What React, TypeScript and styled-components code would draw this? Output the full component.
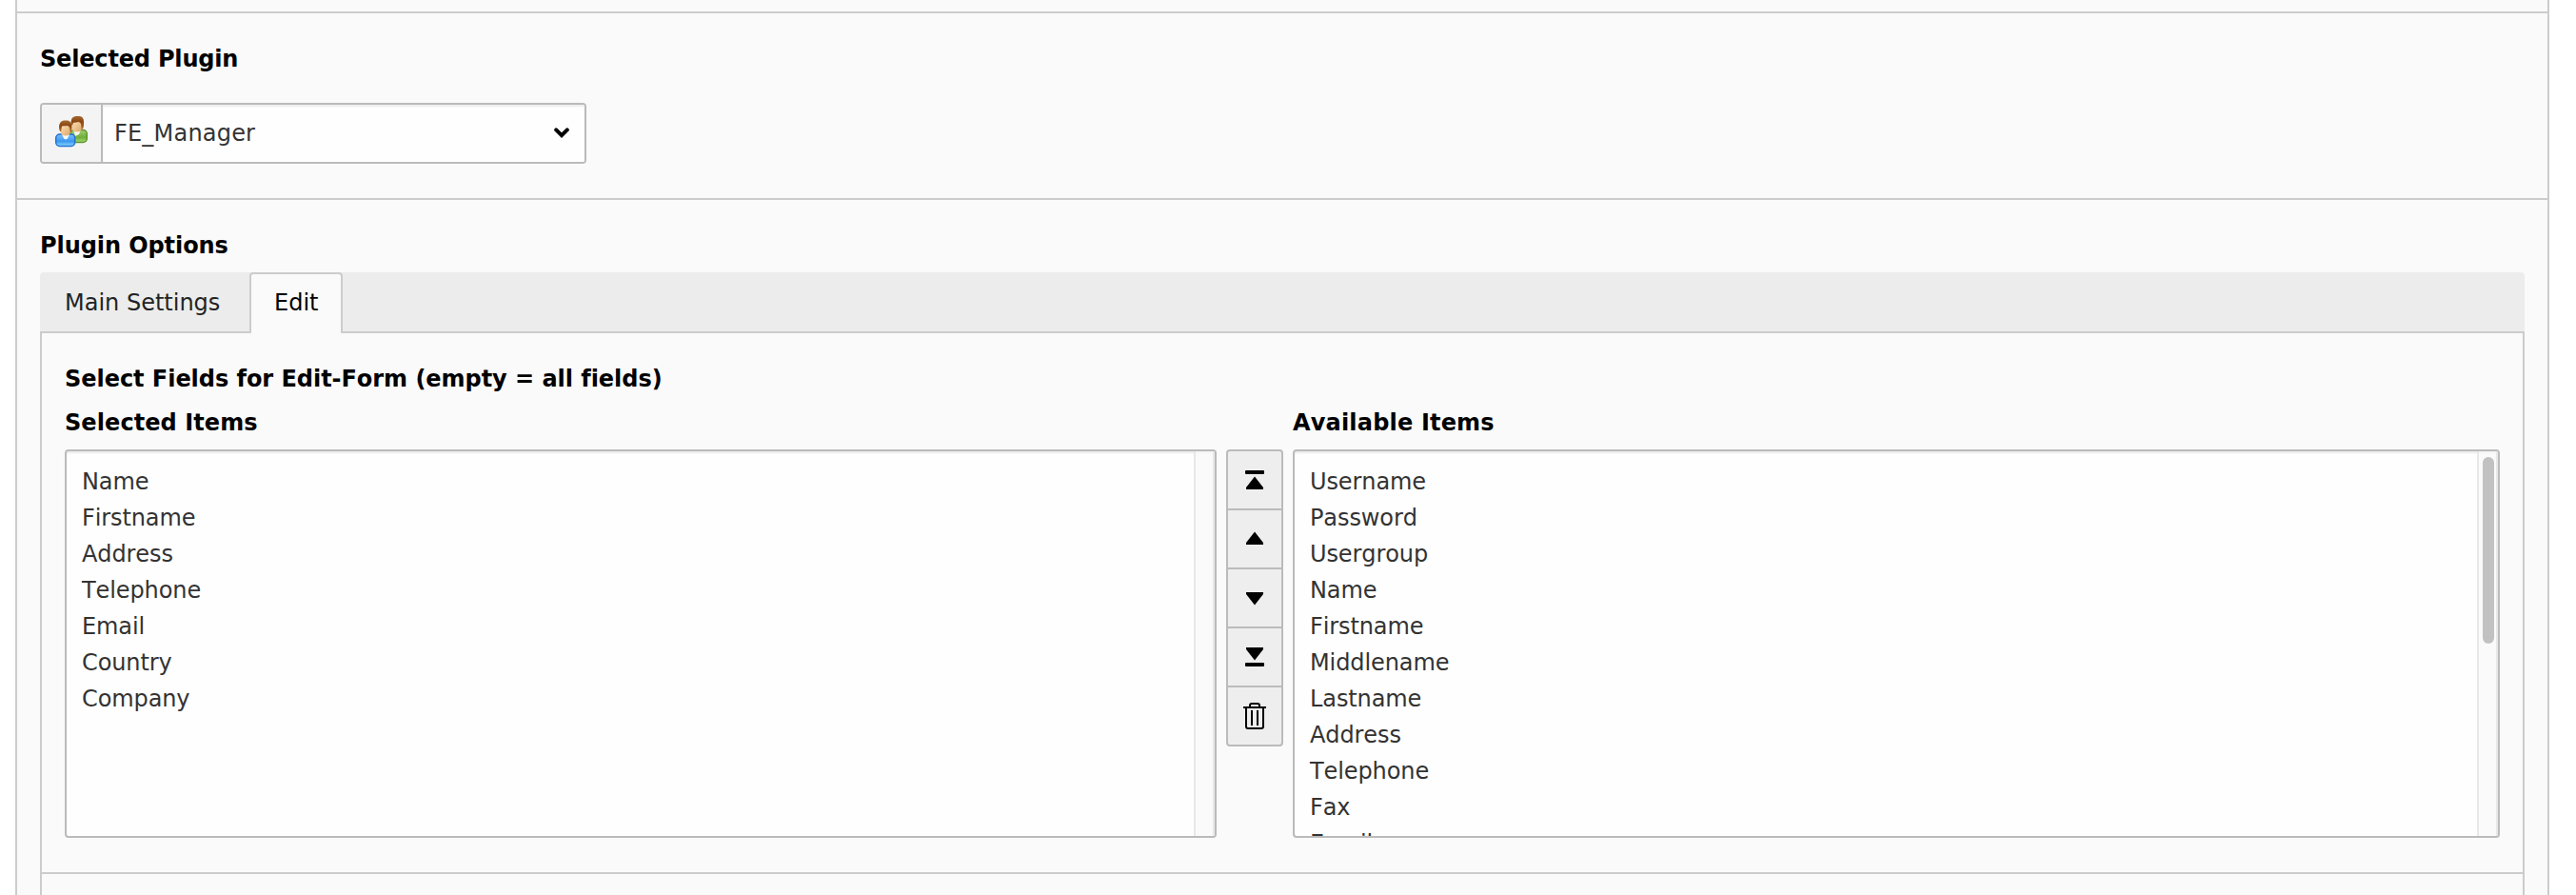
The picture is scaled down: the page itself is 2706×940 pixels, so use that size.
import React from 'react';
import styled, { createGlobalStyle, css } from 'styled-components';

const GlobalStyle = createGlobalStyle`
  *, *::before, *::after { box-sizing: border-box; }
  body {
    margin: 0;
    background: #fff;
    overflow: hidden;
    font-family: Verdana, "DejaVu Sans", sans-serif;
    font-size: 24px;
    font-kerning: none;
    font-variant-ligatures: none;
    line-height: 38px;
    color: #333;
  }
`;

const Page = styled.main`
  width: 2662px;
  height: 940px;
  margin-left: 16px;
  background: #fafafa;
  border: solid #ccc;
  border-width: 0 2px;
  overflow: hidden;
`;

const Section = styled.section<{ $height: number }>`
  height: ${(p) => p.$height}px;
  padding: 0 24px;
  border-bottom: 2px solid #ccc;
`;

const PluginSection = styled(Section)`
  padding-top: 29px;
`;

const OptionsSection = styled.section`
  padding: 29px 24px 0;
`;

const Heading = styled.h2<{ $space?: number; $tracking?: number }>`
  margin: 0 0 ${(p) => p.$space ?? 0}px;
  font-size: 24px;
  font-weight: 700;
  line-height: 38px;
  letter-spacing: ${(p) => p.$tracking ?? 0}px;
  color: #000;
  white-space: nowrap;
`;

const SelectGroup = styled.div`
  display: flex;
  width: 574px;
  height: 64px;
  border: 2px solid #bbb;
  border-radius: 4px;
  overflow: hidden;
`;

const Addon = styled.span`
  display: flex;
  width: 64px;
  align-items: center;
  justify-content: center;
  background: #f4f4f4;
  border-right: 2px solid #bbb;
`;

const SelectBox = styled.div`
  display: flex;
  flex: 1;
  align-items: center;
  justify-content: space-between;
  padding: 0 16px 0 12px;
  background: #fefefe;
  box-shadow: inset 0 2px 2px rgba(0, 0, 0, 0.075);
  letter-spacing: 0.2px;
`;

const TabBar = styled.nav`
  display: flex;
  height: 64px;
  background: #ececec;
  border-radius: 4px 4px 0 0;
  box-shadow: inset 0 -2px 0 #ccc;
`;

const Tab = styled.div<{ $active?: boolean }>`
  padding: 11px 24px 0;
  border: 2px solid transparent;
  border-bottom: 0;
  border-radius: 4px 4px 0 0;
  color: #212424;
  white-space: nowrap;
  ${(p) =>
    p.$active
      ? css`
          width: 98px;
          background: #fafafa;
          border-color: #ccc;
          color: #000;
        `
      : css`
          width: 220px;
        `}
`;

const TabPanel = styled.div`
  border: solid #ccc;
  border-width: 0 2px;
  height: 600px;
`;

const FieldGroup = styled.div`
  height: 568px;
  padding: 29px 24px 0;
  border-bottom: 2px solid #ccc;
`;

const Columns = styled.div`
  display: flex;
  align-items: flex-end;
  gap: 10px;
`;

const Column = styled.div<{ $width: number }>`
  width: ${(p) => p.$width}px;
`;

const ListBox = styled.div`
  display: flex;
  height: 408px;
  background: #fefefe;
  border: 2px solid #bbb;
  border-radius: 4px;
  box-shadow: inset 0 2px 2px rgba(0, 0, 0, 0.075);
  overflow: hidden;
`;

const Items = styled.ul`
  flex: 1;
  margin: 0;
  padding: 13px 16px 0;
  list-style: none;
  letter-spacing: -0.1px;
`;

const Item = styled.li`
  height: 38px;
  white-space: nowrap;
`;

const Track = styled.div`
  width: 22px;
  padding: 6px 2px 0 4px;
  background: rgba(248, 248, 248, 0.7);
  border: solid #e8e8e8;
  border-width: 0 2px;
`;

const Thumb = styled.div`
  width: 12px;
  height: 196px;
  border-radius: 6px;
  background: #c1c1c1;
`;

const ButtonStack = styled.div`
  display: flex;
  flex-direction: column;
  width: 60px;
  height: 408px;
`;

const IconButton = styled.button`
  display: flex;
  height: 64px;
  flex: none;
  align-items: center;
  justify-content: center;
  padding: 0;
  background: #eee;
  border: 2px solid #bbb;
  &:not(:first-child) { margin-top: -2px; }
  &:first-child { border-radius: 4px 4px 0 0; }
  &:last-child { border-radius: 0 0 4px 4px; }
`;

const UsersIcon = () => (
  <svg width="36" height="36" viewBox="0 0 36 36">
    <defs>
      <linearGradient id="hair" x1="0" y1="0" x2="0" y2="1">
        <stop offset="0" stopColor="#a8692f" />
        <stop offset="0.4" stopColor="#8a4612" />
        <stop offset="1" stopColor="#b87433" />
      </linearGradient>
      <linearGradient id="skin" x1="0" y1="0" x2="1" y2="1">
        <stop offset="0" stopColor="#fbe3bb" />
        <stop offset="1" stopColor="#e0a567" />
      </linearGradient>
      <linearGradient id="blue" x1="0" y1="0" x2="0" y2="1">
        <stop offset="0" stopColor="#7cc0f8" />
        <stop offset="0.6" stopColor="#3d97ef" />
        <stop offset="1" stopColor="#8fdcff" />
      </linearGradient>
      <linearGradient id="green" x1="0" y1="0" x2="0" y2="1">
        <stop offset="0" stopColor="#a4cf78" />
        <stop offset="0.6" stopColor="#6fae38" />
        <stop offset="1" stopColor="#a9dc74" />
      </linearGradient>
    </defs>
    <rect x="17" y="14.500" width="17.300" height="13" rx="4" fill="url(#green)" stroke="#5c962c" strokeWidth="1.500" />
    <path d="M20 14h8l-2 5-4 2z" fill="#f5fbee" />
    <rect x="18.500" y="4" width="10.500" height="12.500" rx="4.500" fill="url(#skin)" />
    <path d="M17.500 7q0-6.500 5-7h4q4.500.500 4.500 6v4q-.500 4-2.500 4l-.500-6-2-2-6 1-1 3q-1.500-1-1.500-3z" fill="url(#hair)" />
    <rect x="1.700" y="19" width="20" height="12.500" rx="4" fill="url(#blue)" stroke="#2373d3" strokeWidth="1.500" />
    <path d="M8 18.500h8l-2 5-2 1-2-1z" fill="#f6fbff" />
    <rect x="6.500" y="8" width="10.500" height="12.500" rx="4.500" fill="url(#skin)" />
    <path d="M5 12q0-7 5-7.500h4q4.500.500 4.500 7.500 0 4-1.500 6l-1-6.500-2-1.500-6 .500-1 6q-2-1-2-4.500z" fill="url(#hair)" />
  </svg>
);

const ChevronIcon = () => (
  <svg width="16" height="12" viewBox="0 0 16 12">
    <path d="M2.200 2.400L8 8.200l5.800-5.800" fill="none" stroke="#000" strokeWidth="4" strokeLinecap="round" />
  </svg>
);

type IconName = 'top' | 'up' | 'down' | 'bottom' | 'trash';

const iconShapes: Record<IconName, React.ReactNode> = {
  top: <><rect x="6" y="6" width="20" height="4" rx="1" /><path d="M16 12.500l9 11.500v2H7v-2z" /></>,
  up: <path d="M16 8.500L25 20v2H7v-2z" />,
  down: <path d="M16 23.500L7 12v-2h18v2z" />,
  bottom: <><rect x="6" y="22" width="20" height="4" rx="1" /><path d="M16 19.500L7 8V6h18v2z" /></>,
  trash: (
    <g fill="none" stroke="#000" strokeWidth="2">
      <path d="M4 7h24M11 6V5q0-2 2-2h6q2 0 2 2v1" />
      <path d="M7 8v19q0 2 2 2h14q2 0 2-2V8M13 10v16M19 10v16" />
    </g>
  ),
};

const ControlIcon = ({ name }: { name: IconName }) => (
  <svg width="32" height="32" viewBox="0 0 32 32">{iconShapes[name]}</svg>
);

const controls: { name: IconName; label: string }[] = [
  { name: 'top', label: 'Move to top' },
  { name: 'up', label: 'Move up' },
  { name: 'down', label: 'Move down' },
  { name: 'bottom', label: 'Move to bottom' },
  { name: 'trash', label: 'Remove' },
];

const selected = ['Name', 'Firstname', 'Address', 'Telephone', 'Email', 'Country', 'Company'];
const available = [
  'Username', 'Password', 'Usergroup', 'Name', 'Firstname', 'Middlename',
  'Lastname', 'Address', 'Telephone', 'Fax', 'Email',
];

const ItemList = ({ items, scrollable }: { items: string[]; scrollable?: boolean }) => (
  <ListBox>
    <Items>{items.map((item) => <Item key={item}>{item}</Item>)}</Items>
    <Track>{scrollable && <Thumb />}</Track>
  </ListBox>
);

export default function App() {
  return (
    <>
      <GlobalStyle />
      <Page>
        <Section $height={14} />
        <PluginSection $height={196}>
          <Heading $space={27} $tracking={-0.18}>Selected Plugin</Heading>
          <SelectGroup>
            <Addon><UsersIcon /></Addon>
            <SelectBox>FE_Manager<ChevronIcon /></SelectBox>
          </SelectGroup>
        </PluginSection>
        <OptionsSection>
          <Heading $space={9} $tracking={-0.08}>Plugin Options</Heading>
          <TabBar>
            <Tab>Main Settings</Tab>
            <Tab $active>Edit</Tab>
          </TabBar>
          <TabPanel>
            <FieldGroup>
              <Heading $space={8} $tracking={-0.04}>Select Fields for Edit-Form (empty = all fields)</Heading>
              <Columns>
                <Column $width={1210}>
                  <Heading $space={9} $tracking={0.08}>Selected Items</Heading>
                  <ItemList items={selected} />
                </Column>
                <ButtonStack>
                  {controls.map(({ name, label }) => (
                    <IconButton key={name} aria-label={label}><ControlIcon name={name} /></IconButton>
                  ))}
                </ButtonStack>
                <Column $width={1268}>
                  <Heading $space={9} $tracking={0.18}>Available Items</Heading>
                  <ItemList items={available} scrollable />
                </Column>
              </Columns>
            </FieldGroup>
          </TabPanel>
        </OptionsSection>
      </Page>
    </>
  );
}
